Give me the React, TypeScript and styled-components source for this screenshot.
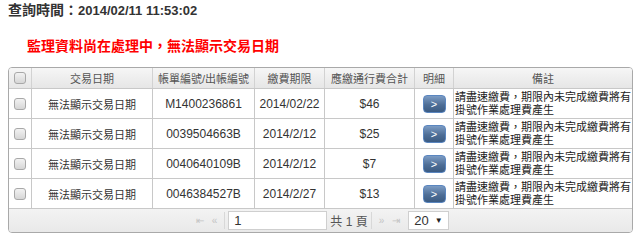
import React from "react";
import styled, { createGlobalStyle } from "styled-components";

type Bill = {
  billNo: string;
  due: string;
  amount: string;
};

const bills: Bill[] = [
  { billNo: "M1400236861", due: "2014/02/22", amount: "$46" },
  { billNo: "0039504663B", due: "2014/2/12", amount: "$25" },
  { billNo: "0040640109B", due: "2014/2/12", amount: "$7" },
  { billNo: "0046384527B", due: "2014/2/27", amount: "$13" },
];

const NOTE = "請盡速繳費，期限內未完成繳費將有\n掛號作業處理費產生";
const NO_DATE = "無法顯示交易日期";

const cols = "23px 121px 102px 70px 90px 39px 1fr";

const App = (): JSX.Element => (
  <>
    <GlobalStyle />
    <Page>
      <QueryTime>查詢時間：<b>2014/02/11 11:53:02</b></QueryTime>
      <Warning>監理資料尚在處理中，無法顯示交易日期</Warning>
      <Grid>
        <HeadRow>
          <HeadCell><Check /></HeadCell>
          <HeadCell>交易日期</HeadCell>
          <HeadCell>帳單編號/出帳編號</HeadCell>
          <HeadCell>繳費期限</HeadCell>
          <HeadCell>應繳通行費合計</HeadCell>
          <HeadCell>明細</HeadCell>
          <HeadCell $last>備註</HeadCell>
        </HeadRow>
        {bills.map((b) => (
          <Row key={b.billNo}>
            <Cell><Check /></Cell>
            <Cell $zh>{NO_DATE}</Cell>
            <Cell>{b.billNo}</Cell>
            <Cell>{b.due}</Cell>
            <Cell>{b.amount}</Cell>
            <Cell><DetailButton>&gt;</DetailButton></Cell>
            <NoteCell>{NOTE}</NoteCell>
          </Row>
        ))}
        <Pager>
          <PagerIcons>
            <span>⇤</span>
            <span>«</span>
          </PagerIcons>
          <Sep />
          <PageInput defaultValue="1" />
          <Total>共 1 頁</Total>
          <Sep />
          <PagerIcons>
            <span>»</span>
            <span>⇥</span>
          </PagerIcons>
          <SizeSelect>
            20 <Caret>▼</Caret>
          </SizeSelect>
        </Pager>
      </Grid>
    </Page>
  </>
);

export default App;

const GlobalStyle = createGlobalStyle`
  body {
    margin: 0;
    background: #fff;
    font-family: "Liberation Sans", Arial, "Noto Sans CJK TC", sans-serif;
  }
`;

const Page = styled.div`
  padding: 1px 7px 0 8px;
  width: 625px;
`;

const QueryTime = styled.div`
  font-size: 14px;
  font-weight: bold;
  color: #333;
  line-height: 18px;
  b {
    font-size: 13px;
  }
`;

const Warning = styled.div`
  margin: 16px 0 0 19px;
  font-size: 14px;
  font-weight: bold;
  color: #f00;
  line-height: 20px;
  height: 31px;
`;

const Grid = styled.div`
  border: 1px solid #a9a9a9;
  border-radius: 4px;
  overflow: hidden;
  color: #333;
`;

const HeadRow = styled.div`
  display: grid;
  grid-template-columns: ${cols};
  height: 20px;
  background: linear-gradient(#f6f6f6, #e6e6e6);
  border-bottom: 1px solid #c8c8c8;
`;

const HeadCell = styled.div<{ $last?: boolean }>`
  display: flex;
  align-items: center;
  justify-content: center;
  font-size: 11px;
  color: #555;
  border-right: ${(p) => (p.$last ? "none" : "1px solid #d2d2d2")};
`;

const Row = styled.div`
  display: grid;
  grid-template-columns: ${cols};
  height: 29px;
  border-bottom: 1px solid #c8c8c8;
`;

const Cell = styled.div<{ $zh?: boolean }>`
  display: flex;
  align-items: center;
  justify-content: center;
  font-size: ${(p) => (p.$zh ? "11px" : "12px")};
  color: #333;
  border-right: 1px solid #c8c8c8;
`;

const NoteCell = styled.div`
  display: flex;
  align-items: center;
  padding-left: 1px;
  font-size: 11px;
  line-height: 13px;
  color: #222;
  white-space: pre-line;
`;

const Check = styled.span`
  display: block;
  width: 10px;
  height: 10px;
  border: 1px solid #a8a8a8;
  border-radius: 3px;
  background: linear-gradient(#f2f2f2, #d6d6d6);
`;

const DetailButton = styled.button`
  width: 23px;
  height: 18px;
  padding: 0;
  border: 1px solid #5a86c0;
  border-radius: 4px;
  background: linear-gradient(#7c9cc4, #4e6e96 55%, #3b5b82);
  color: #fff;
  font-family: "Liberation Sans", Arial, sans-serif;
  font-size: 11px;
  line-height: 14px;
`;

const Pager = styled.div`
  display: flex;
  align-items: center;
  justify-content: center;
  height: 23px;
  background: linear-gradient(#f3f3f3, #e9e9e9);
  font-size: 12px;
`;

const PagerIcons = styled.div`
  display: flex;
  gap: 8px;
  color: #c4c4c4;
  font-size: 10px;
  margin: 0 4px;
`;

const Sep = styled.span`
  width: 1px;
  height: 17px;
  background: #d8d8d8;
  margin: 0 3px;
`;

const PageInput = styled.input`
  box-sizing: border-box;
  width: 99px;
  height: 19px;
  border: 1px solid #cfcfcf;
  padding: 0 5px;
  font-family: "Liberation Sans", Arial, sans-serif;
  font-size: 13px;
  color: #333;
  outline: none;
`;

const Total = styled.span`
  margin-left: 3px;
  color: #555;
  font-size: 12px;
`;

const SizeSelect = styled.div`
  box-sizing: border-box;
  display: flex;
  align-items: center;
  gap: 6px;
  width: 41px;
  height: 19px;
  margin-left: 4px;
  padding-left: 5px;
  background: #fff;
  border: 1px solid #cfcfcf;
  font-size: 13px;
  color: #333;
`;

const Caret = styled.span`
  font-size: 8px;
  color: #222;
`;
